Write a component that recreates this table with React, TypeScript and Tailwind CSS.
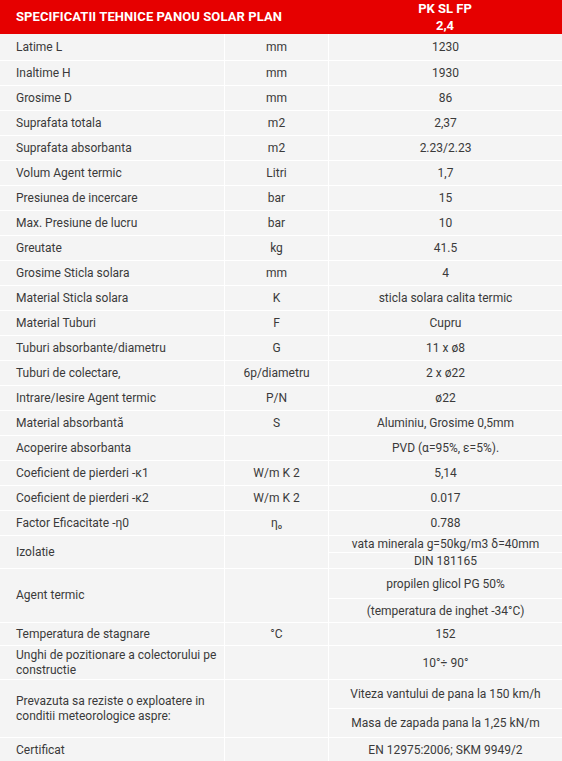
type Row = {
  label: string;
  unit?: string;
  values: string[];
  h: string;
  subH?: string[];
};

const rows: Row[] = [
  { label: 'Latime L', unit: 'mm', values: ['1230'], h: 'h-[26px]' },
  { label: 'Inaltime H', unit: 'mm', values: ['1930'], h: 'h-[24px]' },
  { label: 'Grosime D', unit: 'mm', values: ['86'], h: 'h-[24px]' },
  { label: 'Suprafata totala', unit: 'm2', values: ['2,37'], h: 'h-[24px]' },
  { label: 'Suprafata absorbanta', unit: 'm2', values: ['2.23/2.23'], h: 'h-[24px]' },
  { label: 'Volum Agent termic', unit: 'Litri', values: ['1,7'], h: 'h-[24px]' },
  { label: 'Presiunea de incercare', unit: 'bar', values: ['15'], h: 'h-[24px]' },
  { label: 'Max. Presiune de lucru', unit: 'bar', values: ['10'], h: 'h-[24px]' },
  { label: 'Greutate', unit: 'kg', values: ['41.5'], h: 'h-[24px]' },
  { label: 'Grosime Sticla solara', unit: 'mm', values: ['4'], h: 'h-[24px]' },
  { label: 'Material Sticla solara', unit: 'K', values: ['sticla solara calita termic'], h: 'h-[24px]' },
  { label: 'Material Tuburi', unit: 'F', values: ['Cupru'], h: 'h-[24px]' },
  { label: 'Tuburi absorbante/diametru', unit: 'G', values: ['11 x ø8'], h: 'h-[24px]' },
  { label: 'Tuburi de colectare,', unit: '6p/diametru', values: ['2 x ø22'], h: 'h-[24px]' },
  { label: 'Intrare/Iesire Agent termic', unit: 'P/N', values: ['ø22'], h: 'h-[24px]' },
  { label: 'Material absorbantă', unit: 'S', values: ['Aluminiu, Grosime 0,5mm'], h: 'h-[24px]' },
  { label: 'Acoperire absorbanta', values: ['PVD (α=95%, ε=5%).'], h: 'h-[24px]' },
  { label: 'Coeficient de pierderi -κ1', unit: 'W/m K 2', values: ['5,14'], h: 'h-[24px]' },
  { label: 'Coeficient de pierderi -κ2', unit: 'W/m K 2', values: ['0.017'], h: 'h-[24px]' },
  { label: 'Factor Eficacitate -η0', unit: 'η₀', values: ['0.788'], h: 'h-[24px]' },
  {
    label: 'Izolatie',
    values: ['vata minerala g=50kg/m3 δ=40mm', 'DIN 181165'],
    h: 'h-[32px]',
    subH: ['h-[16px]', 'h-[15px]'],
  },
  {
    label: 'Agent termic',
    values: ['propilen glicol PG 50%', '(temperatura de inghet -34°C)'],
    h: 'h-[53px]',
    subH: ['h-[29px]', 'h-[23px]'],
  },
  { label: 'Temperatura de stagnare', unit: '°C', values: ['152'], h: 'h-[22px]' },
  {
    label: 'Unghi de pozitionare a colectorului pe constructie',
    values: ['10°÷ 90°'],
    h: 'h-[33px]',
  },
  {
    label: 'Prevazuta sa reziste o exploatere in conditii meteorologice aspre:',
    values: ['Viteza vantului de pana la 150 km/h', 'Masa de zapada pana la 1,25 kN/m'],
    h: 'h-[57px]',
    subH: ['h-[28px]', 'h-[28px]'],
  },
  { label: 'Certificat', values: ['EN 12975:2006; SKM 9949/2'], h: 'h-[24px]' },
];

export default function App() {
  return (
    <div className="w-[562px] bg-white font-['Roboto','Liberation_Sans',sans-serif] text-[12px] text-[#3a3a3a]">
      <div className="flex h-[34px] bg-[#e60000] text-white font-bold text-[13px]">
        <div className="w-[328px] pl-4 flex items-center uppercase tracking-[0.1px]">
          Specificatii tehnice panou solar plan
        </div>
        <div className="flex-1 text-center leading-[17px]">
          PK SL FP
          <br />
          2,4
        </div>
      </div>
      <div className="flex flex-col gap-px">
        {rows.map((r) => (
          <div key={r.label} className={`flex gap-px ${r.h}`}>
            <div className="w-[224px] pl-4 pr-1 flex items-center bg-[#f4f4f4] leading-[15px]">
              {r.label}
            </div>
            <div className="w-[103px] flex items-center justify-center bg-[#f4f4f4]">
              {r.unit}
            </div>
            <div className="flex-1 flex flex-col gap-px">
              {r.values.map((v, i) => (
                <div
                  key={v}
                  className={`flex items-center justify-center bg-[#f4f4f4] ${
                    r.subH ? r.subH[i] : 'flex-1'
                  }`}
                >
                  {v}
                </div>
              ))}
            </div>
          </div>
        ))}
      </div>
    </div>
  );
}
